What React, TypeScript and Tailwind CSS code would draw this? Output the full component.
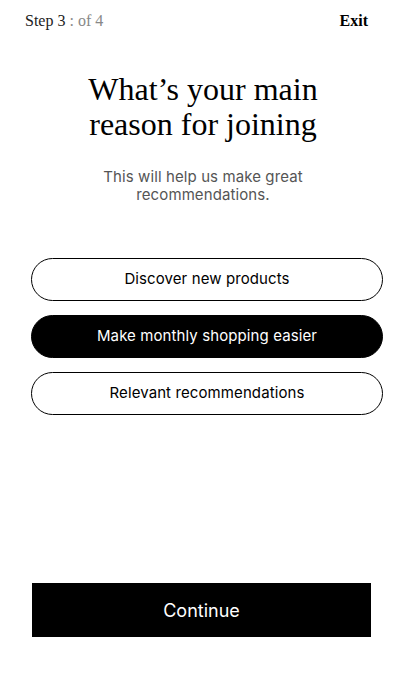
import React, { useState } from 'react';

const options = ['Discover new products', 'Make monthly shopping easier', 'Relevant recommendations'];

export default function App() {
  const [selected, setSelected] = useState(1);

  return (
    <div className="w-[406px] h-[696px] bg-white flex flex-col" style={{ fontFamily: 'Inter, "Liberation Sans", sans-serif' }}>
      {/* Header */}
      <div className="flex justify-between items-center pl-[25px] pr-[38px] pt-[10px] h-[32px] font-['Liberation_Serif',serif] text-[16px]">
        <span>
          <span className="text-[#222]">Step 3 </span>
          <span className="text-[#888]">: of 4</span>
        </span>
        <span className="text-black font-bold">Exit</span>
      </div>

      {/* Title */}
      <h1 className="mt-[40px] text-center font-['Liberation_Serif',serif] text-[32px] leading-[35px] text-black">
        What’s your main
        <br />
        reason for joining
      </h1>
      <p className="mt-[26px] text-center text-[15px] leading-[18px] text-[#555] tracking-[0.1px]">
        This will help us make great
        <br />
        recommendations.
      </p>

      {/* Options */}
      <div className="mt-[54px] pl-[31px] pr-[23px] flex flex-col gap-[14px]">
        {options.map((o, i) => (
          <button
            key={o}
            onClick={() => setSelected(i)}
            className={`h-[43px] rounded-full border-[1.5px] border-black text-[15px] tracking-[0.1px] ${
              selected === i ? 'bg-black text-white' : 'bg-white text-black'
            }`}
          >
            {o}
          </button>
        ))}
      </div>

      <div className="flex-grow" />

      <div className="pl-[32px] pr-[35px] pb-[59px]">
        <button className="w-full h-[54px] bg-black text-white text-[18px]">Continue</button>
      </div>
    </div>
  );
}
